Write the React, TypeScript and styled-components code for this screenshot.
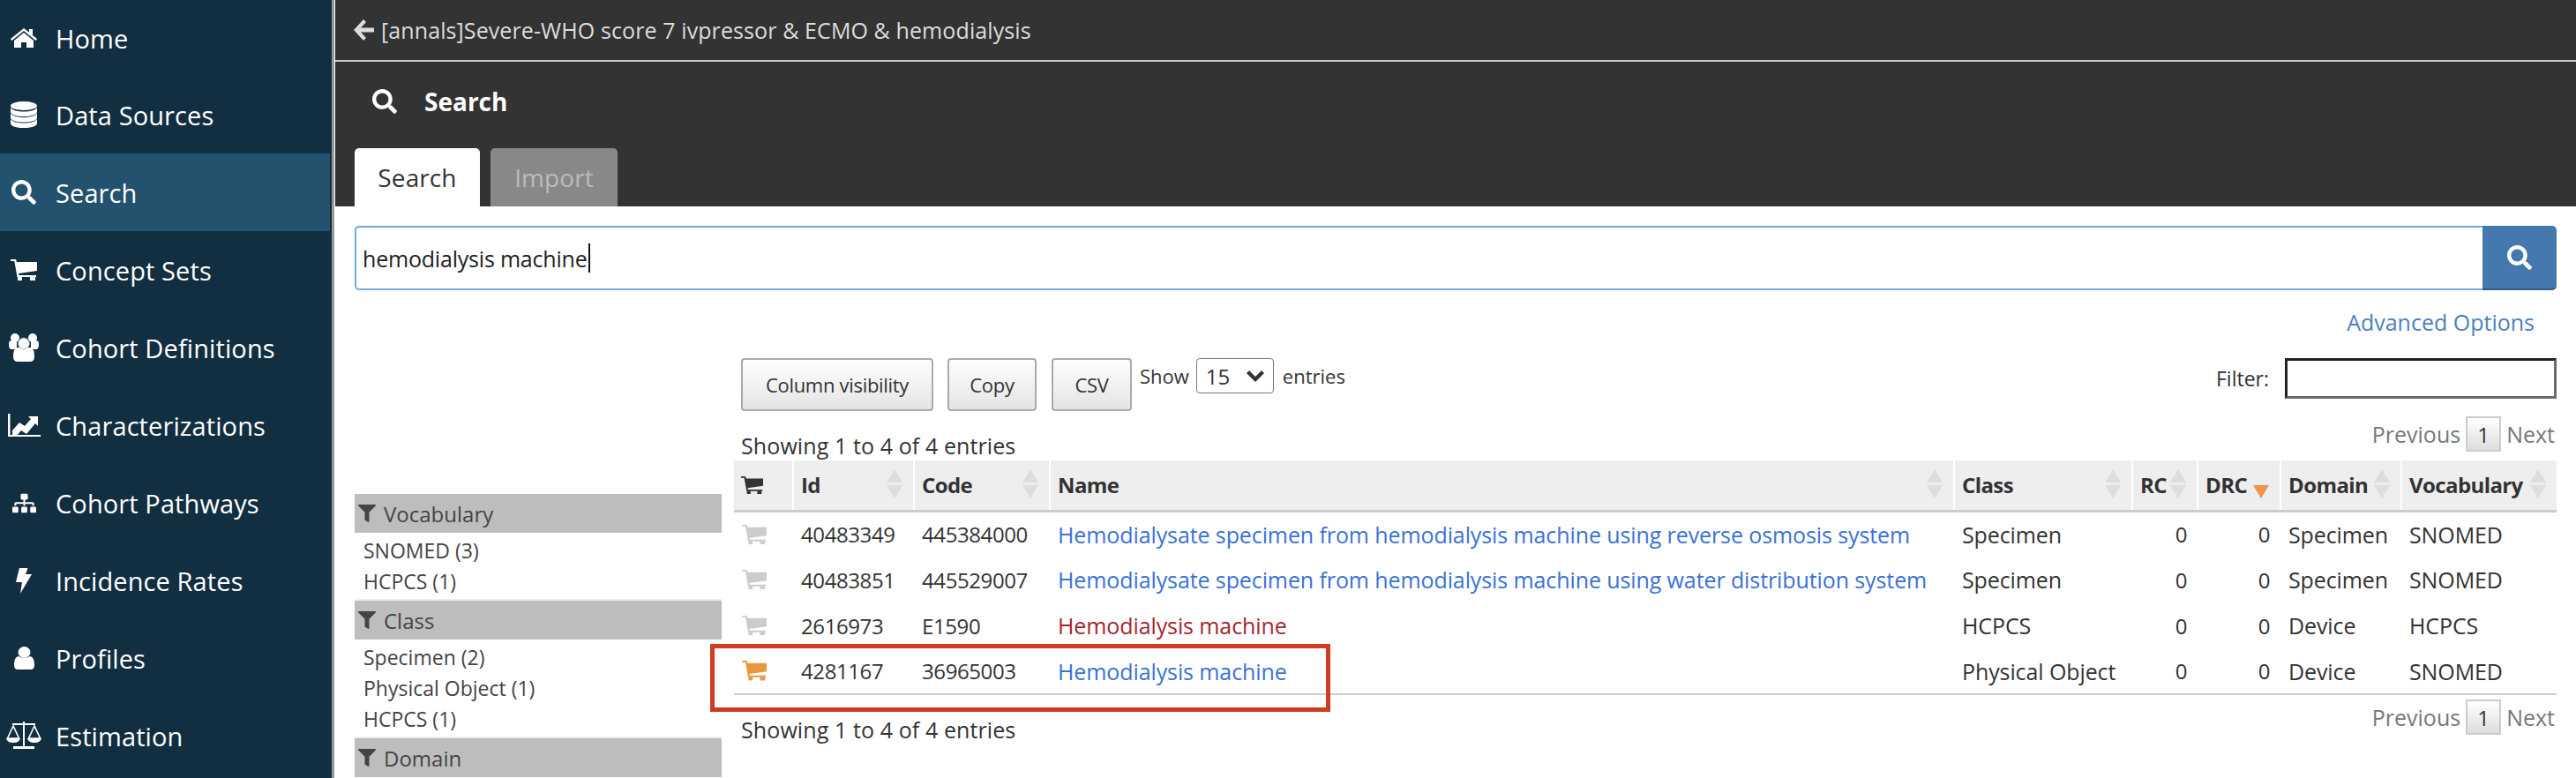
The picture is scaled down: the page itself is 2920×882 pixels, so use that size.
import React from 'react'
import styled, { createGlobalStyle } from 'styled-components'
import { FaFilter, FaSearch, FaSitemap } from 'react-icons/fa'

const GlobalStyle = createGlobalStyle`
  html, body {
    margin: 0;
    height: 882px;
    overflow: hidden;
    background: #fff;
  }
  body {
    font-family: "Open Sans", "Liberation Sans", sans-serif;
    color: #333;
  }
  * {
    box-sizing: border-box;
  }
`

const Page = styled.div`
  display: flex;
  width: 2920px;
  height: 882px;
  overflow: hidden;
`

const Sidebar = styled.nav`
  flex: 0 0 379px;
  height: 882px;
  overflow: hidden;
  background: #122f42;
  border-right: 3px solid #999;
`

const NavItem = styled.div<{ $active?: boolean }>`
  display: flex;
  align-items: center;
  height: 88px;
  margin-right: 2px;
  padding-left: 7px;
  gap: 16px;
  color: #fff;
  font-size: 29px;
  letter-spacing: 0.1px;
  background: ${(p) => (p.$active ? '#22526e' : 'transparent')};

  &:first-child {
    height: 86px;
  }
`

const NavIcon = styled.span`
  display: flex;
  flex: 0 0 40px;
  justify-content: center;
  align-items: center;
`

const Main = styled.main`
  flex: 1;
  min-width: 0;
  margin-left: 1px;
`

const Header = styled.header`
  height: 234px;
  background: #333;
`

const TopBar = styled.div`
  display: flex;
  align-items: center;
  height: 70px;
  padding-left: 21px;
  gap: 8px;
  color: #ddd;
  font-size: 25px;
  letter-spacing: 0.1px;
  border-bottom: 2px solid #ccc;
`

const TitleRow = styled.div`
  display: flex;
  align-items: center;
  height: 90px;
  padding-left: 42px;
  gap: 31px;
  color: #fff;
  font-size: 28px;
  font-weight: 700;
`

const Tabs = styled.div`
  display: flex;
  margin-top: 8px;
  padding-left: 22px;
  gap: 12px;
`

const Tab = styled.div<{ $active?: boolean; $w: number }>`
  display: flex;
  justify-content: center;
  align-items: center;
  width: ${(p) => p.$w}px;
  height: 66px;
  font-size: 28px;
  letter-spacing: 0.1px;
  border-radius: 5px 5px 0 0;
  color: ${(p) => (p.$active ? '#333' : '#bbb')};
  background: ${(p) => (p.$active ? '#fff' : '#888')};
`

const Body = styled.div`
  padding: 22px 22px 0;
`

const SearchGroup = styled.div`
  display: flex;
  height: 73px;
`

const SearchField = styled.div`
  flex: 1;
  display: flex;
  align-items: center;
  padding-left: 7px;
  font-size: 25px;
  letter-spacing: -0.2px;
  color: #222;
  border: 2px solid #74a9dc;
  border-right: 0;
  border-radius: 5px 0 0 5px;
`

const Caret = styled.span`
  width: 2px;
  height: 33px;
  margin-left: 1px;
  background: #111;
`

const SearchButton = styled.div`
  display: flex;
  flex: 0 0 84px;
  justify-content: center;
  align-items: center;
  color: #fff;
  background: #4678b0;
  border-bottom: 2px solid #33597f;
  border-radius: 0 5px 5px 0;
`

const AdvancedRow = styled.div`
  display: flex;
  justify-content: flex-end;
  height: 77px;
  padding: 18px 25px 0 0;
  color: #4d7fbd;
  font-size: 25px;
  line-height: 36px;
`

const Split = styled.div`
  display: grid;
  grid-template-columns: 416px 2066px;
  column-gap: 14px;
`

const Facets = styled.aside`
  margin-top: 154px;
`

const FacetHeader = styled.div`
  display: flex;
  align-items: center;
  height: 44px;
  padding-left: 4px;
  gap: 9px;
  color: #444;
  font-size: 24px;
  background: #bdbdbd;
`

const FacetItems = styled.div`
  padding: 2.5px 0 2.5px 10px;
  border-bottom: 2px solid #eee;
`

const FacetItem = styled.div`
  height: 35px;
  color: #444;
  font-size: 23px;
  line-height: 35px;
`

const Results = styled.section`
  position: relative;
  min-width: 0;
`

const Toolbar = styled.div`
  display: flex;
  align-items: flex-start;
  height: 60px;
  padding-left: 8px;
`

const ExportButton = styled.button<{ $w: number; $gap: number }>`
  width: ${(p) => p.$w}px;
  height: 60px;
  margin-right: ${(p) => p.$gap}px;
  padding: 0;
  color: #333;
  font-family: inherit;
  font-size: 22px;
  letter-spacing: -0.3px;
  background: linear-gradient(#fff, #e4e4e4);
  border: 2px solid #aaa;
  border-radius: 4px;
`

const LengthLabel = styled.div`
  display: flex;
  align-items: center;
  height: 40px;
  gap: 8px;
  font-size: 22px;
`

const LengthWrap = styled.span`
  position: relative;
  display: flex;
  margin-right: 2px;
`

const LengthSelect = styled.select`
  width: 88px;
  height: 40px;
  padding-left: 10px;
  color: #333;
  font-family: inherit;
  font-size: 24px;
  background: #fff;
  border: 1px solid #777;
  border-radius: 4px;
  appearance: none;
`

const Chevron = styled.svg`
  position: absolute;
  top: 14px;
  left: 57px;
  width: 20px;
  height: 13px;
  pointer-events: none;
`

const FilterLabel = styled.div`
  display: flex;
  align-items: center;
  height: 46px;
  margin-left: auto;
  gap: 18px;
  font-size: 23px;
`

const FilterInput = styled.input`
  width: 308px;
  height: 46px;
  border: 3px solid #222;
  border-right-color: #6b6b6b;
  border-bottom-color: #6b6b6b;
`

const InfoRow = styled.div<{ $top: number }>`
  display: flex;
  justify-content: space-between;
  align-items: ${(p) => (p.$top ? 'flex-start' : 'flex-end')};
  height: ${(p) => (p.$top ? 'auto' : '56px')};
  margin-top: ${(p) => p.$top}px;
  padding-left: 8px;
`

const Info = styled.div<{ $top?: number }>`
  margin-top: ${(p) => p.$top ?? 0}px;
  font-size: 25px;
  letter-spacing: 0.1px;
  line-height: 34px;
`

const Pager = styled.div<{ $top: number }>`
  display: flex;
  align-items: center;
  align-self: flex-start;
  margin-top: ${(p) => p.$top}px;
  padding-right: 2px;
  gap: 6px;
  color: #777;
  font-size: 25px;
`

const PagerPage = styled.span`
  display: flex;
  justify-content: center;
  align-items: center;
  width: 40px;
  height: 40px;
  color: #333;
  font-size: 24px;
  background: linear-gradient(#fff, #ddd);
  border: 2px solid #ccc;
`

const Table = styled.table`
  width: 2066px;
  table-layout: fixed;
  border-collapse: collapse;
`

const Col = styled.col<{ $w: number }>`
  width: ${(p) => p.$w}px;
`

const Th = styled.th`
  position: relative;
  height: 57px;
  padding: 0 0 0 8px;
  color: #333;
  font-size: 24px;
  font-weight: 700;
  letter-spacing: -0.6px;
  text-align: left;
  background: #eee;
  border-right: 2px solid #fff;
  border-bottom: 3px solid #ccc;

  &:last-child {
    border-right: 0;
  }
`

const SortArrows = styled.svg`
  position: absolute;
  top: 10px;
  right: 12px;
  width: 18px;
  height: 33px;
`

const Row = styled.tr`
  height: 52px;

  &:last-child td {
    border-bottom: 2px solid #ccc;
  }
`

const Td = styled.td`
  padding: 0 0 0 9px;
  overflow: hidden;
  color: #333;
  font-size: 25px;
  letter-spacing: -0.1px;
  white-space: nowrap;
`

const NumberTd = styled(Td)<{ $right?: boolean }>`
  padding: ${(p) => (p.$right ? '0 12px 0 0' : '0 0 0 9px')};
  font-size: 24px;
  letter-spacing: -0.4px;
  text-align: ${(p) => (p.$right ? 'right' : 'left')};
`

const NameLink = styled.a<{ $invalid?: boolean }>`
  color: ${(p) => (p.$invalid ? '#a5262f' : '#3a72d6')};
  text-decoration: none;
`

const Marker = styled.div`
  position: absolute;
  top: 324px;
  left: -27px;
  width: 703px;
  height: 77px;
  border: 5px solid #cf3a20;
  pointer-events: none;
`

const IconSlot = styled.span<{ $color: string }>`
  display: flex;
  color: ${(p) => p.$color};
`

const HomeIcon = () => (
  <svg width="30" height="22" viewBox="0 0 30 22" fill="currentColor">
    <path d="M15 0L0 12l1.500 2L15 3l13.500 11 1.500-2-5-4V1h-4v3.500z" />
    <path d="M15 5L4 14v8h8v-6h6v6h8v-8z" />
  </svg>
)

const DatabaseIcon = () => (
  <svg width="30" height="30" viewBox="0 0 30 30" fill="currentColor">
    <ellipse cx="15" cy="5" rx="15" ry="5" />
    <path d="M0 7c2 3 8 4.500 15 4.500S28 10 30 7v5c0 3-7 5-15 5S0 15 0 12z" />
    <path d="M0 13.500c2 3 8 4.500 15 4.500s13-1.500 15-4.500v5c0 3-7 5-15 5s-15-2-15-5z" />
    <path d="M0 20c2 3 8 4.500 15 4.500S28 23 30 20v5c0 3-7 5-15 5S0 28 0 25z" />
  </svg>
)

const CartIcon = ({ w = 30 }: { w?: number }) => (
  <svg width={w} height={(w * 24) / 30} viewBox="0 0 30 24" fill="currentColor">
    <path d="M0 0h6l1 3h23v10l-21 3 .5 2H29v2H7.500L4.300 2H0z" />
    <rect x="8" y="20" width="5" height="4" />
    <rect x="22" y="20" width="6" height="4" />
  </svg>
)

const UsersIcon = () => (
  <svg width="34" height="32" viewBox="0 0 34 32" fill="currentColor">
    <circle cx="7" cy="5" r="5" />
    <circle cx="27" cy="5" r="5" />
    <path d="M0 12q0-4 3-4h6v10H3q-3 0-3-6zM34 12q0-4-3-4h-6v10h6q3 0 3-6z" />
    <path d="M5 26q0-8 4-10h16q4 2 4 10 0 6-5 6H10q-5 0-5-6z" />
    <circle cx="17" cy="11.500" r="6.500" stroke="#8296a3" strokeWidth="0.7" />
  </svg>
)

const ChartIcon = () => (
  <svg width="37" height="26" viewBox="0 0 37 26" fill="currentColor">
    <path d="M0 0h2.500v24H37v2H0z" />
    <path d="M5 19l8-9 6 4 7-8-3-3h11v11l-3-3-10 12-6-4-7 8H5z" />
  </svg>
)

const BoltIcon = () => (
  <svg width="18" height="29" viewBox="0 0 18 29" fill="currentColor">
    <path d="M4 0h9.500L11 7h7L5 29l2-13H0z" />
  </svg>
)

const UserIcon = () => (
  <svg width="23" height="26" viewBox="0 0 23 26" fill="currentColor">
    <ellipse cx="11.500" cy="6.500" rx="7" ry="6.500" />
    <path d="M0 21c0-5 1-9 5-10q6.500 4 13 0c4 1 5 5 5 10q0 5-4 5H4q-4 0-4-5z" />
  </svg>
)

const ScaleIcon = () => (
  <svg width="40" height="32" viewBox="0 0 40 32" fill="currentColor">
    <path d="M19 0h2v28h-2zM8 28h24v3H8zM7 2h26v2H7z" />
    <path d="M8 5L1.500 19h13zM32 5l-6.500 14h13z" fill="none" stroke="currentColor" strokeWidth="1.600" />
    <path d="M0 19h16q-1 5-8 5t-8-5zM24 19h16q-1 5-8 5t-8-5z" />
  </svg>
)

const BackIcon = () => (
  <svg width="23" height="24" viewBox="0 0 23 24" fill="currentColor">
    <path d="M11 0l3 3-6 6.500h15v5H8l6 6.500-3 3L0 12z" />
  </svg>
)

const navItems = [
  { label: 'Home', icon: <HomeIcon /> },
  { label: 'Data Sources', icon: <DatabaseIcon /> },
  { label: 'Search', icon: <FaSearch size={28} />, active: true },
  { label: 'Concept Sets', icon: <CartIcon /> },
  { label: 'Cohort Definitions', icon: <UsersIcon /> },
  { label: 'Characterizations', icon: <ChartIcon /> },
  { label: 'Cohort Pathways', icon: <FaSitemap size={27} /> },
  { label: 'Incidence Rates', icon: <BoltIcon /> },
  { label: 'Profiles', icon: <UserIcon /> },
  { label: 'Estimation', icon: <ScaleIcon /> },
]

const facets = [
  { title: 'Vocabulary', items: ['SNOMED (3)', 'HCPCS (1)'] },
  { title: 'Class', items: ['Specimen (2)', 'Physical Object (1)', 'HCPCS (1)'] },
  { title: 'Domain', items: [] as string[] },
]

const columns = [
  { label: '', w: 67, sort: 'none' },
  { label: 'Id', w: 137, sort: 'both' },
  { label: 'Code', w: 154, sort: 'both' },
  { label: 'Name', w: 1025, sort: 'both' },
  { label: 'Class', w: 202, sort: 'both' },
  { label: 'RC', w: 74, sort: 'both' },
  { label: 'DRC', w: 94, sort: 'desc' },
  { label: 'Domain', w: 137, sort: 'both' },
  { label: 'Vocabulary', w: 176, sort: 'both' },
]

const rows = [
  {
    id: '40483349',
    code: '445384000',
    name: 'Hemodialysate specimen from hemodialysis machine using reverse osmosis system',
    cls: 'Specimen',
    domain: 'Specimen',
    vocabulary: 'SNOMED',
  },
  {
    id: '40483851',
    code: '445529007',
    name: 'Hemodialysate specimen from hemodialysis machine using water distribution system',
    cls: 'Specimen',
    domain: 'Specimen',
    vocabulary: 'SNOMED',
  },
  {
    id: '2616973',
    code: 'E1590',
    name: 'Hemodialysis machine',
    cls: 'HCPCS',
    domain: 'Device',
    vocabulary: 'HCPCS',
    invalid: true,
  },
  {
    id: '4281167',
    code: '36965003',
    name: 'Hemodialysis machine',
    cls: 'Physical Object',
    domain: 'Device',
    vocabulary: 'SNOMED',
    inCart: true,
  },
]

const Sort = ({ mode }: { mode: string }) => (
  <SortArrows viewBox="0 0 18 33">
    {mode === 'both' && <path d="M9 0l9 15H0z" fill="#ddd" />}
    <path d="M0 18h18L9 33z" fill={mode === 'desc' ? '#f0934e' : '#ddd'} />
  </SortArrows>
)

const Pagination = ({ top }: { top: number }) => (
  <Pager $top={top}>
    <span>Previous</span>
    <PagerPage>1</PagerPage>
    <span>Next</span>
  </Pager>
)

const App: React.FC = () => (
  <Page>
    <GlobalStyle />
    <Sidebar>
      {navItems.map((item) => (
        <NavItem key={item.label} $active={item.active}>
          <NavIcon>{item.icon}</NavIcon>
          {item.label}
        </NavItem>
      ))}
    </Sidebar>

    <Main>
      <Header>
        <TopBar>
          <BackIcon />
          [annals]Severe-WHO score 7 ivpressor &amp; ECMO &amp; hemodialysis
        </TopBar>
        <TitleRow>
          <FaSearch size={28} />
          Search
        </TitleRow>
        <Tabs>
          <Tab $active $w={142}>
            Search
          </Tab>
          <Tab $w={144}>Import</Tab>
        </Tabs>
      </Header>

      <Body>
        <SearchGroup>
          <SearchField>
            hemodialysis machine
            <Caret />
          </SearchField>
          <SearchButton>
            <FaSearch size={28} />
          </SearchButton>
        </SearchGroup>
        <AdvancedRow>Advanced Options</AdvancedRow>

        <Split>
          <Facets>
            {facets.map((facet) => (
              <div key={facet.title}>
                <FacetHeader>
                  <FaFilter size={20} />
                  {facet.title}
                </FacetHeader>
                <FacetItems>
                  {facet.items.map((item) => (
                    <FacetItem key={item}>{item}</FacetItem>
                  ))}
                </FacetItems>
              </div>
            ))}
          </Facets>

          <Results>
            <Toolbar>
              <ExportButton $w={218} $gap={16}>
                Column visibility
              </ExportButton>
              <ExportButton $w={101} $gap={17}>
                Copy
              </ExportButton>
              <ExportButton $w={91} $gap={9}>
                CSV
              </ExportButton>
              <LengthLabel>
                Show
                <LengthWrap>
                  <LengthSelect defaultValue="15">
                    <option value="15">15</option>
                  </LengthSelect>
                  <Chevron viewBox="0 0 20 13" fill="#333">
                    <path d="M3 0l7 7 7-7 3 3-10 10L0 3z" />
                  </Chevron>
                </LengthWrap>
                entries
              </LengthLabel>
              <FilterLabel>
                Filter:
                <FilterInput />
              </FilterLabel>
            </Toolbar>

            <InfoRow $top={0}>
              <Info>Showing 1 to 4 of 4 entries</Info>
              <Pagination top={6} />
            </InfoRow>

            <Table>
              <colgroup>
                {columns.map((col, i) => (
                  <Col key={i} $w={col.w} />
                ))}
              </colgroup>
              <thead>
                <tr>
                  {columns.map((col, i) => (
                    <Th key={i}>
                      {i === 0 ? (
                        <IconSlot $color="#333">
                          <CartIcon w={25} />
                        </IconSlot>
                      ) : (
                        col.label
                      )}
                      {col.sort !== 'none' && <Sort mode={col.sort} />}
                    </Th>
                  ))}
                </tr>
              </thead>
              <tbody>
                {rows.map((row) => (
                  <Row key={row.id}>
                    <Td>
                      <IconSlot $color={row.inCart ? '#e8973e' : '#ccc'}>
                        <CartIcon w={28} />
                      </IconSlot>
                    </Td>
                    <NumberTd>{row.id}</NumberTd>
                    <NumberTd>{row.code}</NumberTd>
                    <Td>
                      <NameLink $invalid={row.invalid}>{row.name}</NameLink>
                    </Td>
                    <Td>{row.cls}</Td>
                    <NumberTd $right>0</NumberTd>
                    <NumberTd $right>0</NumberTd>
                    <Td>{row.domain}</Td>
                    <Td>{row.vocabulary}</Td>
                  </Row>
                ))}
              </tbody>
            </Table>

            <InfoRow $top={5}>
              <Info $top={17}>Showing 1 to 4 of 4 entries</Info>
              <Pagination top={0} />
            </InfoRow>

            <Marker />
          </Results>
        </Split>
      </Body>
    </Main>
  </Page>
)

export default App
